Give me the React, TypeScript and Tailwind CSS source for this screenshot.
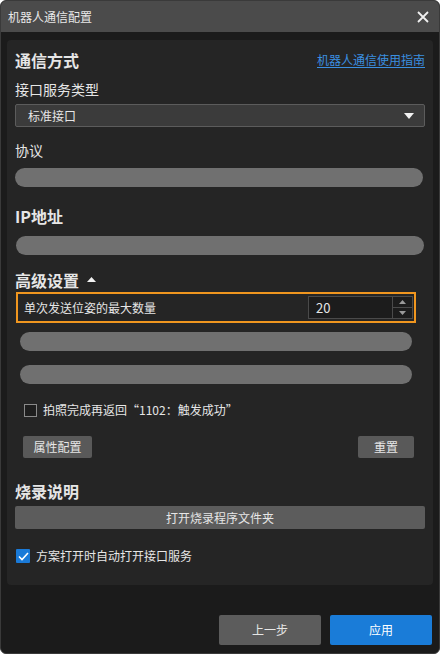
import React from "react";

const font = { fontFamily: '"Noto Sans CJK SC", "Noto Sans", sans-serif' };

function Pill({ cls }: { cls: string }) {
  return <div className={`h-[19px] rounded-full bg-[#707070] ${cls}`} />;
}

export default function App() {
  return (
    <div
      style={font}
      className="w-[440px] h-[654px] bg-[#1b1b1b] rounded-[6px] overflow-hidden border border-[#3a3a3a] flex flex-col text-[#e6e6e6]"
    >
      {/* Title bar */}
      <div className="h-[31px] shrink-0 bg-[#4b4b4b] flex items-center justify-between pl-[7px] pr-[8px]">
        <span className="text-[12px] text-[#e8e8e8]">机器人通信配置</span>
        <svg width="14" height="14" viewBox="0 0 14 14" className="mr-[1px]">
          <path d="M2 2 L12 12 M12 2 L2 12" stroke="#f0f0f0" strokeWidth="1.8" />
        </svg>
      </div>

      {/* Panel */}
      <div className="mx-[6px] mt-[8px] h-[545px] bg-[#252525] rounded-[4px] pl-[8px] pr-[8px] pt-[9px] flex flex-col">
        <div className="h-[22px] flex items-center justify-between">
          <span className="text-[16px] font-bold leading-[22px]">通信方式</span>
          <span className="text-[12px] text-[#3b8fe0] underline underline-offset-2">机器人通信使用指南</span>
        </div>
        <div className="mt-[8px] h-[20px] text-[14px] leading-[20px]">接口服务类型</div>
        <div className="mt-[5px] h-[23px] bg-[#3b3b3b] border border-[#5c5c5c] rounded-[2px] flex items-center justify-between pl-[12px] pr-[10px]">
          <span className="text-[12px]">标准接口</span>
          <svg width="10" height="6" viewBox="0 0 10 6">
            <path d="M0 0 H10 L5 6 Z" fill="#f2f2f2" />
          </svg>
        </div>
        <div className="mt-[13px] h-[20px] text-[14px] leading-[20px]">协议</div>
        <Pill cls="mt-[8px] mr-[2px]" />
        <div className="mt-[18px] h-[22px] text-[16px] font-bold leading-[22px]">IP地址</div>
        <Pill cls="mt-[9px] ml-[1px] mr-[1px]" />
        <div className="mt-[14px] h-[22px] flex items-center gap-[8px]">
          <span className="text-[16px] font-bold leading-[22px]">高级设置</span>
          <svg width="9" height="5" viewBox="0 0 9 5" className="mb-[2px]">
            <path d="M0 5 H9 L4.5 0 Z" fill="#f2f2f2" />
          </svg>
        </div>
        <div className="mt-[1px] ml-[1px] mr-[9px] h-[31px] border-[2px] border-[#f0961f] flex items-center justify-between pl-[6px] pr-[1px]">
          <span className="text-[12px]">单次发送位姿的最大数量</span>
          <div className="w-[105px] h-[23px] bg-[#1c1c1c] border border-[#4a4a4a] flex">
            <div className="flex-1 flex items-center pl-[7px] text-[13px]">20</div>
            <div className="w-[20px] border-l border-[#4a4a4a] flex flex-col">
              <div className="flex-1 flex items-center justify-center border-b border-[#4a4a4a]">
                <svg width="7" height="4" viewBox="0 0 7 4"><path d="M0 4 H7 L3.5 0 Z" fill="#9a9a9a" /></svg>
              </div>
              <div className="flex-1 flex items-center justify-center">
                <svg width="7" height="4" viewBox="0 0 7 4"><path d="M0 0 H7 L3.5 4 Z" fill="#9a9a9a" /></svg>
              </div>
            </div>
          </div>
        </div>
        <Pill cls="mt-[9px] ml-[5px] mr-[13px]" />
        <Pill cls="mt-[14px] ml-[5px] mr-[13px]" />
        <div className="mt-[16px] h-[20px] flex items-center pl-[9px] gap-[6px]">
          <div className="w-[13px] h-[13px] border border-[#8a8a8a] bg-[#1e1e1e]" />
          <span className="text-[12px]">拍照完成再返回“1102：触发成功”</span>
        </div>
        <div className="mt-[16px] flex justify-between pl-[8px] pr-[11px]">
          <div className="w-[69px] h-[22px] bg-[#595959] rounded-[2px] flex items-center justify-center text-[12px]">属性配置</div>
          <div className="w-[56px] h-[22px] bg-[#595959] rounded-[2px] flex items-center justify-center text-[12px]">重置</div>
        </div>
        <div className="mt-[22px] h-[22px] text-[16px] font-bold leading-[22px]">烧录说明</div>
        <div className="mt-[4px] h-[23px] bg-[#5c5c5c] rounded-[2px] flex items-center justify-center text-[12px]">打开烧录程序文件夹</div>
        <div className="mt-[17px] h-[20px] flex items-center pl-[1px] gap-[6px]">
          <div className="w-[14px] h-[14px] bg-[#1a7ad8] rounded-[1px] flex items-center justify-center">
            <svg width="11" height="9" viewBox="0 0 11 9">
              <path d="M1 4.5 L4 7.5 L10 1" stroke="#ffffff" strokeWidth="1.6" fill="none" />
            </svg>
          </div>
          <span className="text-[12px]">方案打开时自动打开接口服务</span>
        </div>
      </div>

      {/* Footer */}
      <div className="mt-[30px] flex justify-end gap-[9px] pr-[7px]">
        <div className="w-[102px] h-[30px] bg-[#5c5c5c] rounded-[2px] flex items-center justify-center text-[12px]">上一步</div>
        <div className="w-[102px] h-[30px] bg-[#1a7cd8] rounded-[2px] flex items-center justify-center text-[12px] text-white">应用</div>
      </div>
    </div>
  );
}
